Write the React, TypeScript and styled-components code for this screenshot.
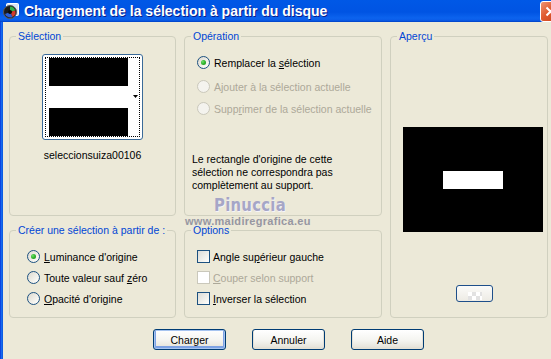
import React from 'react';
import styled, { createGlobalStyle } from 'styled-components';

const Global = createGlobalStyle`
  html, body { margin: 0; padding: 0; overflow: hidden; background: #ECE9D8; }
  #root { width: 551px; height: 359px; overflow: hidden; }
`;

const Window = styled.div`
  width: 564px;
  height: 359px;
  display: flex;
  flex-direction: column;
  font-family: "Liberation Sans", Arial, sans-serif;
  font-size: 10.5px;
  color: #000;
`;

const TitleBar = styled.div`
  height: 22px;
  flex: none;
  display: flex;
  align-items: center;
  padding-left: 3px;
  background: linear-gradient(to bottom, #0058E6 0%, #0054E3 55%, #0C63EE 82%, #0A5CE8 92%, #0040C4 100%);
`;

const TitleText = styled.div`
  flex: 1;
  margin-left: 5px;
  color: #fff;
  font: bold 14px "Liberation Sans", Arial, sans-serif;
  text-shadow: 1px 1px 0 #0A1E8C;
  white-space: nowrap;
`;

const CloseBtn = styled.div`
  width: 21px;
  height: 21px;
  margin-right: 3px;
  box-sizing: border-box;
  border: 1px solid #fff;
  border-radius: 3px;
  background: linear-gradient(135deg, #EC9474 0%, #E05A2E 45%, #C8401A 100%);
  display: flex;
  align-items: center;
  justify-content: center;
`;

const Body = styled.div`
  flex: 1;
  display: flex;
`;

const Frame = styled.div`
  width: 3px;
  flex: none;
  background: linear-gradient(to right, #0831D9, #166AEE 50%, #0855DD);
`;

const Client = styled.div`
  flex: 1;
  position: relative;
  padding: 8px 0 0 6px;
  display: flex;
  flex-direction: column;
`;

const Grid = styled.div`
  display: grid;
  grid-template-columns: 167px 198px 158px;
  grid-template-rows: 186px 94px;
  column-gap: 8px;
  row-gap: 8px;
`;

const Group = styled.fieldset<{ $area: string }>`
  margin: 0;
  padding: 0;
  min-width: 0;
  box-sizing: border-box;
  border: 1px solid #D0D0BF;
  border-radius: 4px;
  display: flex;
  flex-direction: column;
  grid-area: ${p => p.$area};
`;

const Legend = styled.legend`
  margin-left: 6px;
  padding: 0 2px;
  color: #0046D5;
  line-height: 13px;
  font-size: 10.5px;
`;

const SelBody = styled.div`
  display: flex;
  flex-direction: column;
  align-items: center;
  padding-top: 11px;
`;

const Thumb = styled.div`
  width: 101px;
  height: 86px;
  box-sizing: border-box;
  border: 1px solid #3A6A98;
  border-radius: 3px;
  background: #fff;
  padding: 2px;
  display: flex;
`;

const Focus = styled.div`
  flex: 1;
  border: 1px dotted #000;
  display: flex;
  padding-left: 3px;
`;

const Bands = styled.div`
  width: 79px;
  display: flex;
  flex-direction: column;
`;

const Band = styled.div<{ $h: number; $c: string }>`
  height: ${p => p.$h}px;
  background: ${p => p.$c};
`;

const ArrowCol = styled.div`
  flex: 1;
  display: flex;
  align-items: center;
  justify-content: flex-end;
  padding-right: 1px;
  padding-bottom: 2px;
`;

const ThumbName = styled.div`
  margin-top: 9px;
  line-height: 13px;
`;

const List = styled.div<{ $pl: number; $pt: number }>`
  display: flex;
  flex-direction: column;
  padding-left: ${p => p.$pl}px;
  padding-top: ${p => p.$pt}px;
`;

const Row = styled.div<{ $mt?: number; $gap?: number; $disabled?: boolean }>`
  display: flex;
  align-items: center;
  height: 13px;
  gap: ${p => p.$gap ?? 4}px;
  margin-top: ${p => p.$mt ?? 0}px;
  color: ${p => (p.$disabled ? '#ACA899' : '#000')};
  white-space: nowrap;
`;

const RadioCircle = styled.span<{ $disabled?: boolean }>`
  width: 13px;
  height: 13px;
  flex: none;
  box-sizing: border-box;
  border-radius: 50%;
  border: 1px solid ${p => (p.$disabled ? '#CAC8BB' : '#1C5180')};
  background: ${p => (p.$disabled ? '#F4F3EE' : 'linear-gradient(135deg, #DCD9CF 0%, #F6F5F0 70%, #fff 100%)')};
  display: flex;
  align-items: center;
  justify-content: center;
`;

const Dot = styled.span`
  width: 5px;
  height: 5px;
  border-radius: 50%;
  background: radial-gradient(circle at 35% 35%, #6EE06A 0%, #2DB22A 50%, #1C8C1A 100%);
`;

const CheckBox = styled.span<{ $disabled?: boolean }>`
  width: 13px;
  height: 13px;
  flex: none;
  box-sizing: border-box;
  border: 1px solid ${p => (p.$disabled ? '#CAC8BB' : '#1C5180')};
  background: ${p => (p.$disabled ? '#fff' : 'linear-gradient(135deg, #DCDCD7 0%, #F4F4F0 70%, #fff 100%)')};
`;

const Note = styled.div`
  margin-top: 38px;
  padding-left: 7px;
  line-height: 12.8px;
`;

const PreviewBody = styled.div`
  display: flex;
  flex-direction: column;
  align-items: flex-start;
  padding: 84px 0 0 12px;
`;

const PreviewBox = styled.div`
  width: 140px;
  height: 105px;
  background: #000;
  display: flex;
  align-items: center;
  justify-content: center;
`;

const PreviewSel = styled.div`
  width: 60px;
  height: 18px;
  background: #fff;
  margin-top: 1px;
`;

const SmallBtn = styled.div`
  margin: 53px 0 0 53px;
  width: 37px;
  height: 17px;
  box-sizing: border-box;
  border: 1px solid #1E4F8A;
  border-radius: 3px;
  background: linear-gradient(#FBFBF9, #EDEBE4);
  display: flex;
  align-items: flex-end;
  justify-content: center;
`;

const Checker = styled.div`
  width: 14px;
  height: 8px;
  margin-bottom: 1px;
  background: repeating-conic-gradient(#E2E2E2 0% 25%, #fff 0% 50%) 0 0 / 8px 8px;
`;

const Buttons = styled.div`
  display: flex;
  gap: 26px;
  margin-top: 11px;
  padding-left: 144px;
`;

const Button = styled.div<{ $default?: boolean }>`
  width: 73px;
  height: 21px;
  box-sizing: border-box;
  border: 1px solid #003C74;
  border-radius: 3px;
  background: linear-gradient(to bottom, #FFFFFF 0%, #F4F4F0 55%, #E3E0D6 100%);
  display: flex;
  align-items: center;
  justify-content: center;
  ${p => (p.$default ? 'box-shadow: inset 0 0 0 1px #A6C4F0, inset 0 -1px 0 2px #7EA2E4;' : 'box-shadow: inset 0 -1px 0 1px #E4E1D6;')}
`;

const WaterName = styled.div`
  position: absolute;
  left: 211px;
  top: 172px;
  font: bold 18px "DejaVu Sans", "Liberation Sans", sans-serif;
  letter-spacing: 0.4px;
  color: #A6A6C6;
  text-shadow: 1px 1px 0 #F4F4FA;
  pointer-events: none;
  transform: scaleX(0.82);
  transform-origin: left top;
`;

const WaterUrl = styled.div`
  position: absolute;
  left: 182px;
  top: 193px;
  font: bold 11px "Liberation Sans", Arial, sans-serif;
  letter-spacing: 0.3px;
  color: #8E8E9C;
  opacity: 0.9;
  pointer-events: none;
`;

const Radio = ({ checked, disabled }: { checked?: boolean; disabled?: boolean }) => (
  <RadioCircle $disabled={disabled}>{checked ? <Dot /> : null}</RadioCircle>
);

const AppIcon = () => (
  <svg width="16" height="16" viewBox="0 0 16 16">
    <rect x="3.5" y="0.5" width="12" height="12" rx="1" fill="#D8E4F4" stroke="#fff" />
    <circle cx="7" cy="9" r="6.5" fill="#1A1A1A" stroke="#5A5A5A" />
    <path d="M7 9 L7 3.5 A5.5 5.5 0 0 1 12.2 7.5 Z" fill="#2FB34A" />
    <path d="M7 9 L12.2 7.5 A5.5 5.5 0 0 1 9.5 13.9 Z" fill="#D33A2C" />
    <path d="M7 9 L9.5 13.9 A5.5 5.5 0 0 1 2 11 Z" fill="#2C5FD6" />
    <circle cx="7" cy="9" r="2" fill="#0A0A0A" />
  </svg>
);

export default function App() {
  return (
    <>
      <Global />
      <Window>
        <TitleBar>
          <AppIcon />
          <TitleText>Chargement de la sélection à partir du disque</TitleText>
          <CloseBtn>
            <svg width="11" height="11" viewBox="0 0 11 11">
              <path d="M1.5 1.5 L9.5 9.5 M9.5 1.5 L1.5 9.5" stroke="#fff" strokeWidth="2" />
            </svg>
          </CloseBtn>
        </TitleBar>
        <Body>
          <Frame />
          <Client>
            <Grid>
              <Group $area="1 / 1 / 2 / 2">
                <Legend>Sélection</Legend>
                <SelBody>
                  <Thumb>
                    <Focus>
                      <Bands>
                        <Band $h={28} $c="#000" />
                        <Band $h={22} $c="#fff" />
                        <Band $h={28} $c="#000" />
                      </Bands>
                      <ArrowCol>
                        <svg width="5" height="3" viewBox="0 0 5 3">
                          <path d="M0 0 H5 L2.5 3 Z" fill="#000" />
                        </svg>
                      </ArrowCol>
                    </Focus>
                  </Thumb>
                  <ThumbName>seleccionsuiza00106</ThumbName>
                </SelBody>
              </Group>
              <Group $area="1 / 2 / 2 / 3">
                <Legend>Opération</Legend>
                <List $pl={12} $pt={13}>
                  <Row>
                    <Radio checked />
                    <span>Remplacer la <u>s</u>élection</span>
                  </Row>
                  <Row $mt={11} $disabled>
                    <Radio disabled />
                    <span>Ajouter à la sélection actuelle</span>
                  </Row>
                  <Row $mt={9} $disabled>
                    <Radio disabled />
                    <span>Supp<u>r</u>imer de la sélection actuelle</span>
                  </Row>
                </List>
                <Note>
                  Le rectangle d'origine de cette
                  <br />
                  sélection ne correspondra pas
                  <br />
                  complètement au support.
                </Note>
              </Group>
              <Group $area="1 / 3 / 3 / 4">
                <Legend>Aperçu</Legend>
                <PreviewBody>
                  <PreviewBox>
                    <PreviewSel />
                  </PreviewBox>
                  <SmallBtn>
                    <Checker />
                  </SmallBtn>
                </PreviewBody>
              </Group>
              <Group $area="2 / 1 / 3 / 2">
                <Legend>Créer une sélection à partir de :</Legend>
                <List $pl={17} $pt={13}>
                  <Row>
                    <Radio checked />
                    <span><u>L</u>uminance d'origine</span>
                  </Row>
                  <Row $mt={8}>
                    <Radio />
                    <span>Toute valeur sauf <u>z</u>éro</span>
                  </Row>
                  <Row $mt={8}>
                    <Radio />
                    <span><u>O</u>pacité d'origine</span>
                  </Row>
                </List>
              </Group>
              <Group $area="2 / 2 / 3 / 3">
                <Legend>Options</Legend>
                <List $pl={12} $pt={13}>
                  <Row $gap={3}>
                    <CheckBox />
                    <span>Angle su<u>p</u>érieur gauche</span>
                  </Row>
                  <Row $gap={3} $mt={8} $disabled>
                    <CheckBox $disabled />
                    <span><u>C</u>ouper selon support</span>
                  </Row>
                  <Row $gap={3} $mt={8}>
                    <CheckBox />
                    <span><u>I</u>nverser la sélection</span>
                  </Row>
                </List>
              </Group>
            </Grid>
            <Buttons>
              <Button $default>Charger</Button>
              <Button>Annuler</Button>
              <Button>Aide</Button>
            </Buttons>
            <WaterName>Pinuccia</WaterName>
            <WaterUrl>www.maidiregrafica.eu</WaterUrl>
          </Client>
        </Body>
      </Window>
    </>
  );
}
